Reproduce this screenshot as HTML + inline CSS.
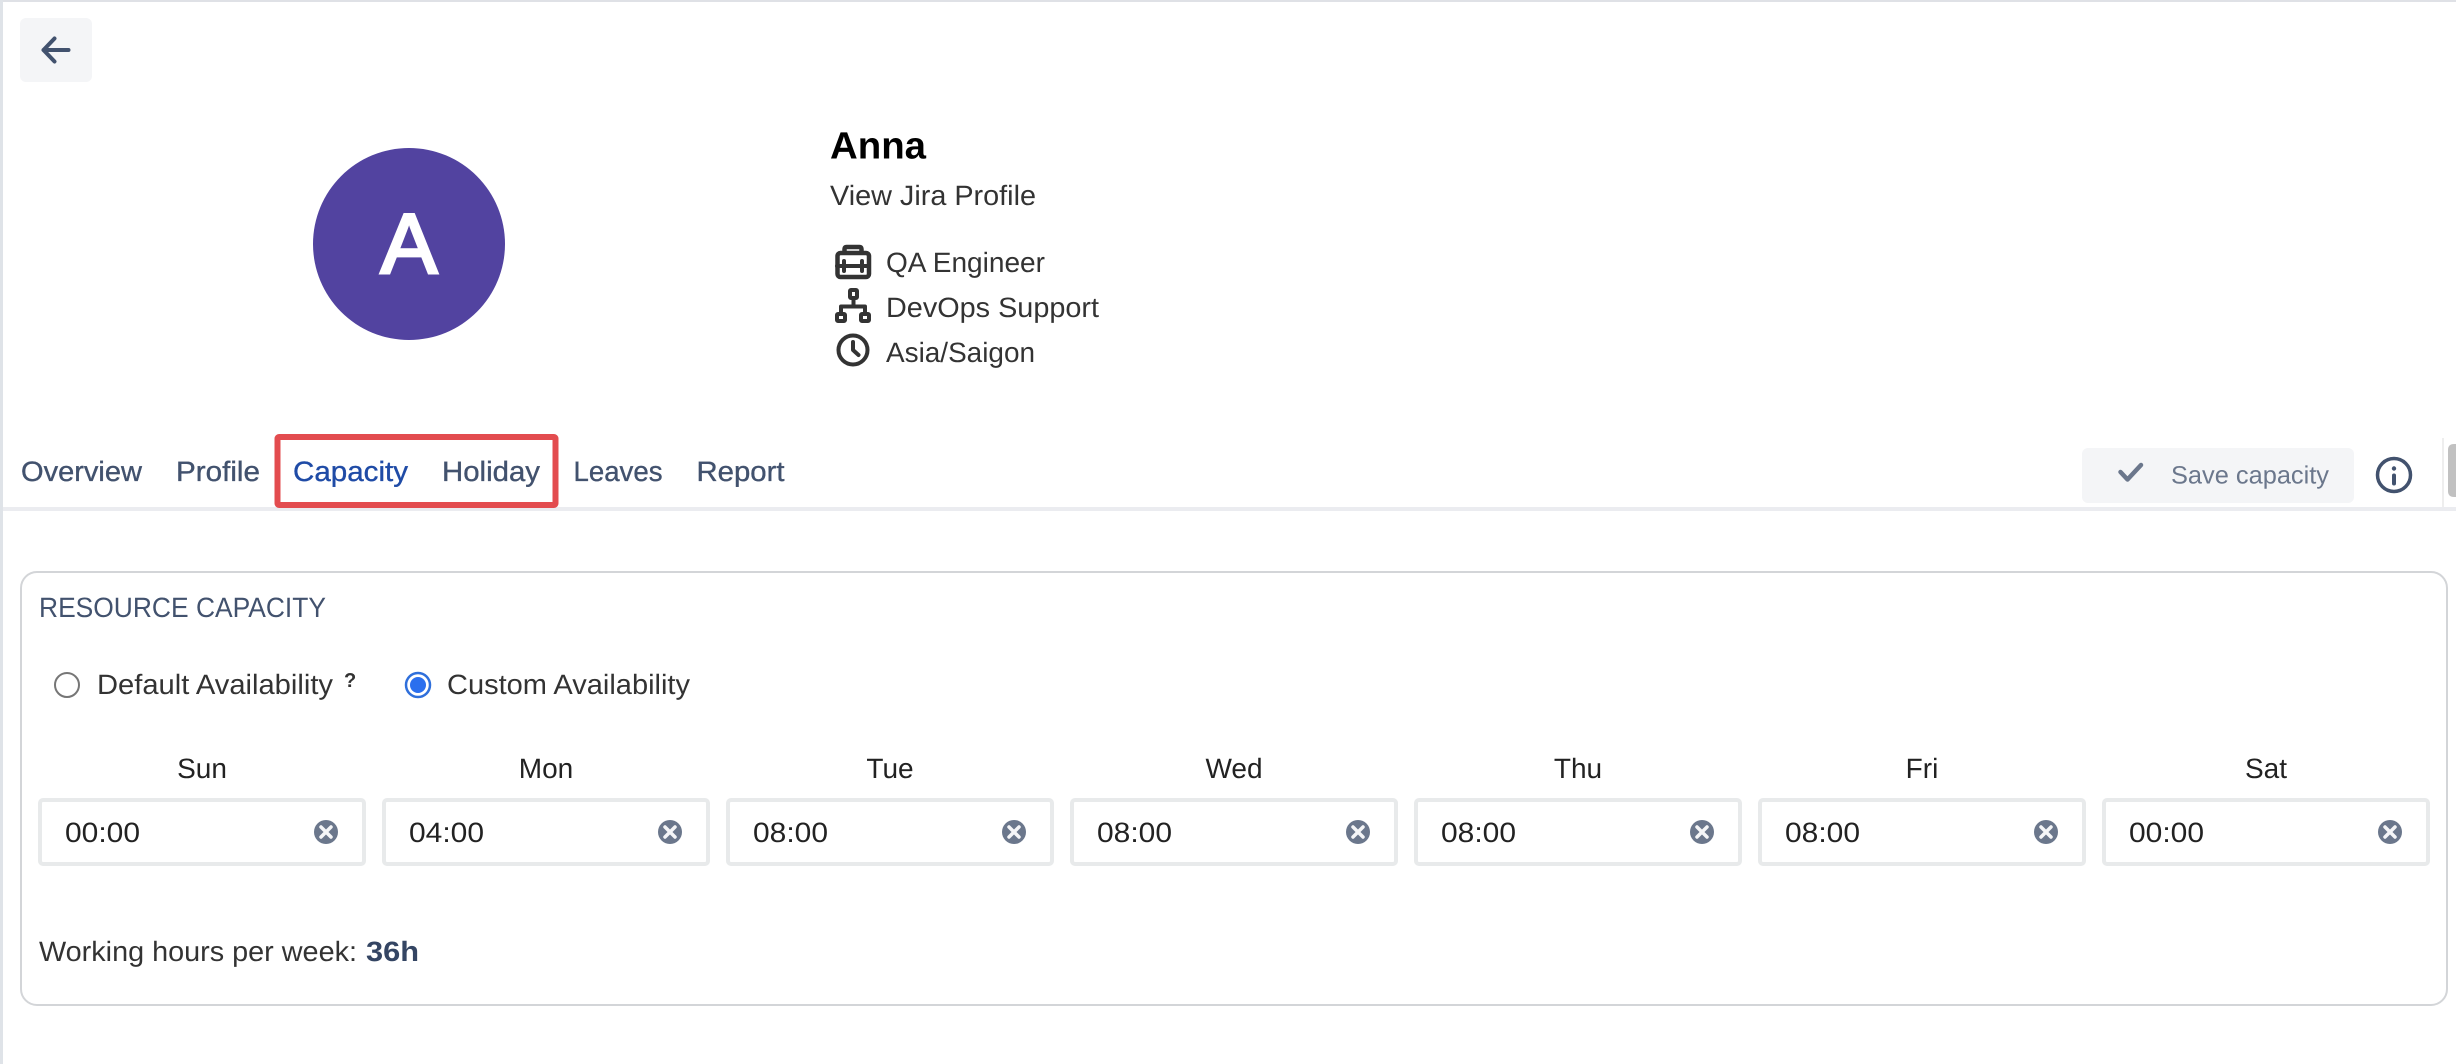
<!DOCTYPE html>
<html lang="en">
<head>
<meta charset="utf-8">
<title>Anna - Capacity</title>
<style>
html,body{margin:0;padding:0;background:#fff;width:2456px;height:1064px;overflow:hidden}
svg{display:block}
text{font-family:"Liberation Sans",sans-serif;font-size:28px;fill:#333;text-rendering:geometricPrecision}
.tab{fill:#42526e;stroke:#42526e;stroke-width:.35px}
.day{fill:#222;text-anchor:middle}
.val{fill:#222}
</style>
</head>
<body>
<svg width="2456" height="1064" viewBox="0 0 2456 1064" xmlns="http://www.w3.org/2000/svg">
<rect width="2456" height="1064" fill="#fff"/>
<rect x="0" y="0" width="2456" height="2" fill="#dfe1e6"/>
<rect x="0" y="0" width="3" height="1064" fill="#dfe3e8"/>

<!-- back button -->
<rect x="20" y="18" width="72" height="64" rx="6" fill="#f4f5f7"/>
<path d="M43.500 50H68.500M54.500 38.500L43.500 50L54.500 61.500" fill="none" stroke="#42526e" stroke-width="4" stroke-linecap="round" stroke-linejoin="round"/>

<!-- avatar -->
<circle cx="409" cy="244" r="96" fill="#5243a0"/>
<text x="409" y="273" text-anchor="middle" style="font-size:85px;fill:#fff;stroke:#fff;stroke-width:3px">A</text>

<!-- profile -->
<text x="830" y="158.500" textLength="96" lengthAdjust="spacingAndGlyphs" style="font-size:38px;font-weight:bold;fill:#000">Anna</text>
<text x="830" y="205" textLength="206" lengthAdjust="spacingAndGlyphs">View Jira Profile</text>

<g fill="none" stroke="#333" stroke-width="4.500" stroke-linejoin="round" stroke-linecap="round">
  <rect x="837.500" y="253" width="31.500" height="24" rx="3"/>
  <path d="M844.500 252V249Q844.500 247 846.500 247H859.500Q861.500 247 861.500 249V252"/>
  <path d="M837 266H869" stroke-width="4"/>
  <path d="M844 261V271M862 261V271" stroke-width="4"/>
  <rect x="850" y="290" width="7" height="8" rx="1" stroke-width="4"/>
  <rect x="837" y="314" width="8" height="7" rx="1" stroke-width="4"/>
  <rect x="861" y="314" width="8" height="7" rx="1" stroke-width="4"/>
  <path d="M853.500 299V306M841 313V306.500H865V313" stroke-width="4"/>
  <circle cx="853" cy="350" r="14.500" stroke-width="4"/>
  <path d="M853 342V350L858.500 355" stroke-width="4"/>
</g>

<text x="886" y="272" textLength="159" lengthAdjust="spacingAndGlyphs">QA Engineer</text>
<text x="886" y="317" textLength="213" lengthAdjust="spacingAndGlyphs">DevOps Support</text>
<text x="886" y="362" textLength="149" lengthAdjust="spacingAndGlyphs">Asia/Saigon</text>

<!-- tabs -->
<rect x="3" y="507" width="2453" height="4" fill="#ebecf0"/>
<text class="tab" x="21" y="481" textLength="121" lengthAdjust="spacingAndGlyphs">Overview</text>
<text class="tab" x="176" y="481" textLength="84" lengthAdjust="spacingAndGlyphs">Profile</text>
<text class="tab" x="293" y="481" textLength="115" lengthAdjust="spacingAndGlyphs" style="fill:#1f4ba6;stroke:#1f4ba6">Capacity</text>
<text class="tab" x="442" y="481" textLength="98" lengthAdjust="spacingAndGlyphs">Holiday</text>
<text class="tab" x="573.500" y="481" textLength="89" lengthAdjust="spacingAndGlyphs">Leaves</text>
<text class="tab" x="696.500" y="481" textLength="88" lengthAdjust="spacingAndGlyphs">Report</text>
<rect x="277.500" y="437" width="278" height="68" rx="1.500" fill="none" stroke="#e34c4f" stroke-width="6"/>

<!-- save button -->
<rect x="2082" y="448" width="272" height="55" rx="6" fill="#f4f5f7"/>
<path d="M2120.500 472L2127.500 479.500L2141 465" fill="none" stroke="#6b778c" stroke-width="4.500" stroke-linecap="round" stroke-linejoin="round"/>
<text x="2171" y="483.500" textLength="158" lengthAdjust="spacingAndGlyphs" style="font-size:25px;fill:#6b778c">Save capacity</text>
<circle cx="2394" cy="475" r="16.500" fill="none" stroke="#42526e" stroke-width="3.500"/>
<circle cx="2394" cy="468.500" r="2.200" fill="#42526e"/>
<path d="M2394 475.500V483.500" stroke="#42526e" stroke-width="4" stroke-linecap="round"/>

<!-- scrollbar -->
<rect x="2442" y="438" width="2" height="69" fill="#eeeeee"/>
<path d="M2456 444H2454Q2448 444 2448 450V491Q2448 497 2454 497H2456Z" fill="#c1c1c1"/>

<!-- card -->
<rect x="21" y="572" width="2426" height="433" rx="16" fill="#fff" stroke="#d3d5d8" stroke-width="2"/>
<text x="39" y="617" textLength="287" lengthAdjust="spacingAndGlyphs" style="fill:#42526e">RESOURCE CAPACITY</text>

<!-- radios -->
<circle cx="67" cy="685" r="12" fill="#fff" stroke="#767676" stroke-width="2"/>
<text x="97" y="694" textLength="236" lengthAdjust="spacingAndGlyphs">Default Availability</text>
<text x="344" y="687" style="font-size:20px;font-weight:bold;fill:#333">?</text>
<circle cx="418" cy="685" r="12" fill="#fff" stroke="#2f6fdb" stroke-width="2.500"/>
<circle cx="418" cy="685" r="8" fill="#2b6fee"/>
<text x="447" y="694" textLength="243" lengthAdjust="spacingAndGlyphs">Custom Availability</text>

<!-- days -->
<text class="day" x="202" y="778">Sun</text>
<text class="day" x="546" y="778">Mon</text>
<text class="day" x="890" y="778">Tue</text>
<text class="day" x="1234" y="778">Wed</text>
<text class="day" x="1578" y="778">Thu</text>
<text class="day" x="1922" y="778">Fri</text>
<text class="day" x="2266" y="778">Sat</text>

<g fill="#fff" stroke="#e8eaeb" stroke-width="4">
  <rect x="40" y="800" width="324" height="64" rx="3"/>
  <rect x="384" y="800" width="324" height="64" rx="3"/>
  <rect x="728" y="800" width="324" height="64" rx="3"/>
  <rect x="1072" y="800" width="324" height="64" rx="3"/>
  <rect x="1416" y="800" width="324" height="64" rx="3"/>
  <rect x="1760" y="800" width="324" height="64" rx="3"/>
  <rect x="2104" y="800" width="324" height="64" rx="3"/>
</g>

<text class="val" x="65" y="842" textLength="75" lengthAdjust="spacingAndGlyphs">00:00</text>
<text class="val" x="409" y="842" textLength="75" lengthAdjust="spacingAndGlyphs">04:00</text>
<text class="val" x="753" y="842" textLength="75" lengthAdjust="spacingAndGlyphs">08:00</text>
<text class="val" x="1097" y="842" textLength="75" lengthAdjust="spacingAndGlyphs">08:00</text>
<text class="val" x="1441" y="842" textLength="75" lengthAdjust="spacingAndGlyphs">08:00</text>
<text class="val" x="1785" y="842" textLength="75" lengthAdjust="spacingAndGlyphs">08:00</text>
<text class="val" x="2129" y="842" textLength="75" lengthAdjust="spacingAndGlyphs">00:00</text>

<g fill="#6b778c">
  <circle cx="326" cy="832" r="12"/>
  <circle cx="670" cy="832" r="12"/>
  <circle cx="1014" cy="832" r="12"/>
  <circle cx="1358" cy="832" r="12"/>
  <circle cx="1702" cy="832" r="12"/>
  <circle cx="2046" cy="832" r="12"/>
  <circle cx="2390" cy="832" r="12"/>
</g>
<g fill="none" stroke="#f4f5f7" stroke-width="3.500" stroke-linecap="round">
  <path d="M321 827L331 837M331 827L321 837"/>
  <path d="M665 827L675 837M675 827L665 837"/>
  <path d="M1009 827L1019 837M1019 827L1009 837"/>
  <path d="M1353 827L1363 837M1363 827L1353 837"/>
  <path d="M1697 827L1707 837M1707 827L1697 837"/>
  <path d="M2041 827L2051 837M2051 827L2041 837"/>
  <path d="M2385 827L2395 837M2395 827L2385 837"/>
</g>

<!-- footer -->
<text x="39" y="961" textLength="318" lengthAdjust="spacingAndGlyphs">Working hours per week:</text>
<text x="366" y="961" textLength="53" lengthAdjust="spacingAndGlyphs" style="font-weight:bold;fill:#344563">36h</text>
</svg>
</body>
</html>
